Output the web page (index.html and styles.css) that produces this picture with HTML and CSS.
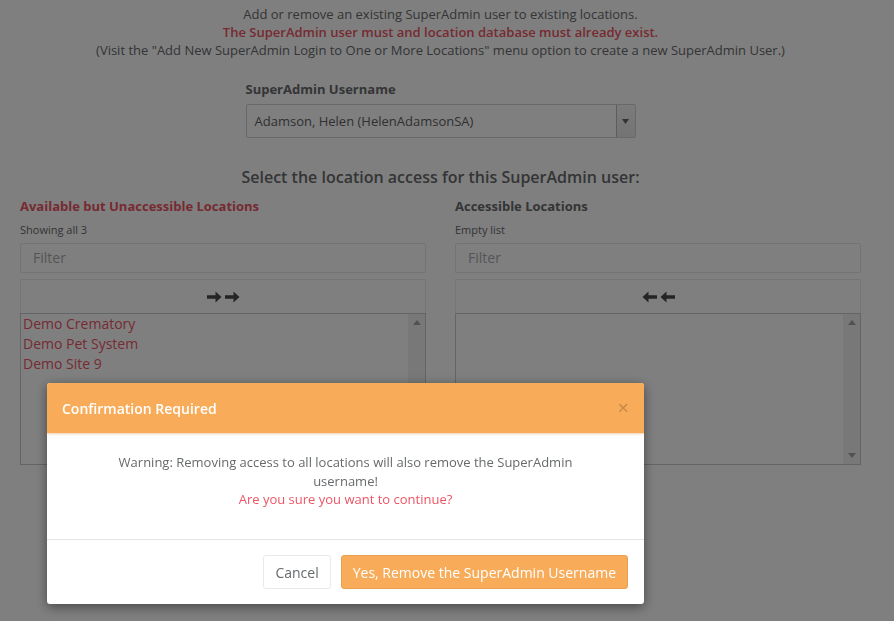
FILE: index.html
```html
<!DOCTYPE html>
<html>
<head>
<meta charset="utf-8">
<link rel="stylesheet" href="styles.css">
</head>
<body>
<div class="page">
  <div class="intro">
    <p>Add or remove an existing SuperAdmin user to existing locations.</p>
    <p class="danger strong">The SuperAdmin user must and location database must already exist.</p>
    <p>(Visit the "Add New SuperAdmin Login to One or More Locations" menu option to create a new SuperAdmin User.)</p>
  </div>

  <div class="user-select">
    <div class="field-label">SuperAdmin Username</div>
    <div class="select">
      <span class="select-value">Adamson, Helen (HelenAdamsonSA)</span>
      <span class="select-arrow"><svg width="7" height="5" viewBox="0 0 7 5"><path d="M0 0H7L3.5 5Z" fill="#666"/></svg></span>
    </div>
  </div>

  <h3 class="section-title">Select the location access for this SuperAdmin user:</h3>

  <div class="duallist">
    <div class="box">
      <div class="box-label danger">Available but Unaccessible Locations</div>
      <div class="info">Showing all 3</div>
      <div class="filter">Filter</div>
      <div class="move-btn">
        <svg width="33" height="12" viewBox="0 0 33 12"><path d="M0 4.3H8.5V0.5L14.5 6L8.5 11.5V7.7H0Z" fill="#4a4a4a"/><path d="M18 4.3H26.5V0.5L32.5 6L26.5 11.5V7.7H18Z" fill="#4a4a4a"/></svg>
      </div>
      <div class="list">
        <div class="items">
          <div class="item">Demo Crematory</div>
          <div class="item">Demo Pet System</div>
          <div class="item">Demo Site 9</div>
        </div>
        <div class="scrollbar">
          <svg width="8" height="5" viewBox="0 0 8 5"><path d="M0 5H8L4 0Z" fill="#a3a3a3"/></svg>
          <svg width="8" height="5" viewBox="0 0 8 5"><path d="M0 0H8L4 5Z" fill="#a3a3a3"/></svg>
        </div>
      </div>
    </div>
    <div class="box">
      <div class="box-label">Accessible Locations</div>
      <div class="info">Empty list</div>
      <div class="filter">Filter</div>
      <div class="move-btn">
        <svg width="33" height="12" viewBox="0 0 33 12"><path d="M33 4.3H24.5V0.5L18.5 6L24.5 11.5V7.7H33Z" fill="#4a4a4a"/><path d="M15 4.3H6.5V0.5L0.5 6L6.5 11.5V7.7H15Z" fill="#4a4a4a"/></svg>
      </div>
      <div class="list">
        <div class="items"></div>
        <div class="scrollbar">
          <svg width="8" height="5" viewBox="0 0 8 5"><path d="M0 5H8L4 0Z" fill="#a3a3a3"/></svg>
          <svg width="8" height="5" viewBox="0 0 8 5"><path d="M0 0H8L4 5Z" fill="#a3a3a3"/></svg>
        </div>
      </div>
    </div>
  </div>
</div>

<div class="backdrop"></div>

<div class="modal">
  <div class="modal-header">
    <span class="modal-title">Confirmation Required</span>
    <span class="close">&times;</span>
  </div>
  <div class="modal-body">
    <p>Warning: Removing access to all locations will also remove the SuperAdmin username!</p>
    <p class="modal-danger">Are you sure you want to continue?</p>
  </div>
  <div class="modal-footer">
    <button class="btn btn-default">Cancel</button>
    <button class="btn btn-warning">Yes, Remove the SuperAdmin Username</button>
  </div>
</div>
</body>
</html>
```

FILE: styles.css
```css
* { box-sizing: border-box; }
html, body { margin: 0; padding: 0; }
body {
  font-family: "Open Sans", "Liberation Sans", sans-serif;
  font-size: 13px;
  color: #676a6c;
  background: #ffffff;
  width: 894px;
  height: 621px;
  overflow: hidden;
}
p { margin: 0; }

.page {
  width: 841px;
  margin-left: 20px;
  padding-top: 5px;
}

.intro {
  text-align: center;
  line-height: 18px;
}
.danger { color: #ed5565; }
.strong { font-weight: 600; }

.user-select {
  width: 390px;
  margin: 21px auto 0;
}
.field-label {
  font-weight: 700;
  line-height: 18px;
  color: #676a6c;
}
.select {
  margin-top: 6px;
  height: 34px;
  border: 1px solid #cfd1d3;
  border-radius: 2px;
  display: flex;
  align-items: stretch;
  background: #fff;
}
.select-value {
  flex: 1;
  font-size: 13px;
  line-height: 32px;
  padding-left: 8px;
  color: #5e6163;
}
.select-arrow {
  width: 19px;
  border-left: 1px solid #b9bbbd;
  display: flex;
  align-items: center;
  justify-content: center;
  background: linear-gradient(#f6f6f6, #e8e8e8);
}

.section-title {
  margin: 28px 0 0;
  text-align: center;
  font-size: 16px;
  font-weight: 600;
  line-height: 22px;
  color: #676a6c;
}

.duallist {
  display: grid;
  grid-template-columns: 406px 406px;
  column-gap: 29px;
  margin-top: 9px;
}
.box-label {
  font-weight: 700;
  line-height: 18px;
}
.info {
  font-size: 11px;
  line-height: 16px;
  margin-top: 7px;
}
.filter {
  margin-top: 5px;
  height: 30px;
  border: 1px solid #e5e6e7;
  border-radius: 2px;
  padding-left: 12px;
  font-size: 14px;
  line-height: 28px;
  color: #a9abad;
}
.move-btn {
  margin-top: 6px;
  height: 34px;
  border: 1px solid #e7eaec;
  border-bottom: none;
  display: flex;
  align-items: center;
  justify-content: center;
  background: #fff;
}
.list {
  height: 152px;
  border: 1px solid #c9cbcd;
  display: flex;
}
.items {
  flex: 1;
  padding-left: 2px;
}
.item {
  font-size: 14px;
  line-height: 20px;
  color: #ed5565;
}
.scrollbar {
  width: 17px;
  background: #f1f1f1;
  display: flex;
  flex-direction: column;
  justify-content: space-between;
  align-items: center;
  padding: 6px 0;
}

.backdrop {
  position: fixed;
  inset: 0;
  background: rgba(0, 0, 0, 0.5);
}

.modal {
  position: fixed;
  top: 383px;
  left: 47px;
  width: 597px;
  background: #fff;
  border-radius: 3px;
  box-shadow: 0 3px 12px rgba(0, 0, 0, 0.45);
  overflow: hidden;
}
.modal-header {
  height: 50px;
  background: #f8ac59;
  display: flex;
  align-items: center;
  justify-content: space-between;
  padding: 0 15px;
  box-shadow: 0 1px 2px rgba(230, 160, 90, 0.5);
  position: relative;
}
.modal-title {
  color: #fff;
  font-weight: 600;
  font-size: 14px;
}
.close {
  font-size: 20px;
  font-weight: 400;
  color: rgba(0, 0, 0, 0.22);
  line-height: 1;
  margin-right: 0;
}
.modal-body {
  padding: 20px 48px 30px;
  text-align: center;
  line-height: 19px;
  height: 106px;
}
.modal-danger {
  color: #ed5565;
  line-height: 16px;
}
.modal-footer {
  border-top: 1px solid #e5e5e5;
  padding: 15px 16px 15px;
  display: flex;
  justify-content: flex-end;
  gap: 10px;
}
.btn {
  font-family: "Open Sans", "Liberation Sans", sans-serif;
  font-size: 14px;
  height: 34px;
  padding: 0 11px;
  border-radius: 3px;
  cursor: pointer;
}
.btn-default {
  background: #fff;
  border: 1px solid #e7eaec;
  color: #676a6c;
}
.btn-warning {
  background: #f8ac59;
  border: 1px solid #e8a050;
  color: #fff;
}
```
